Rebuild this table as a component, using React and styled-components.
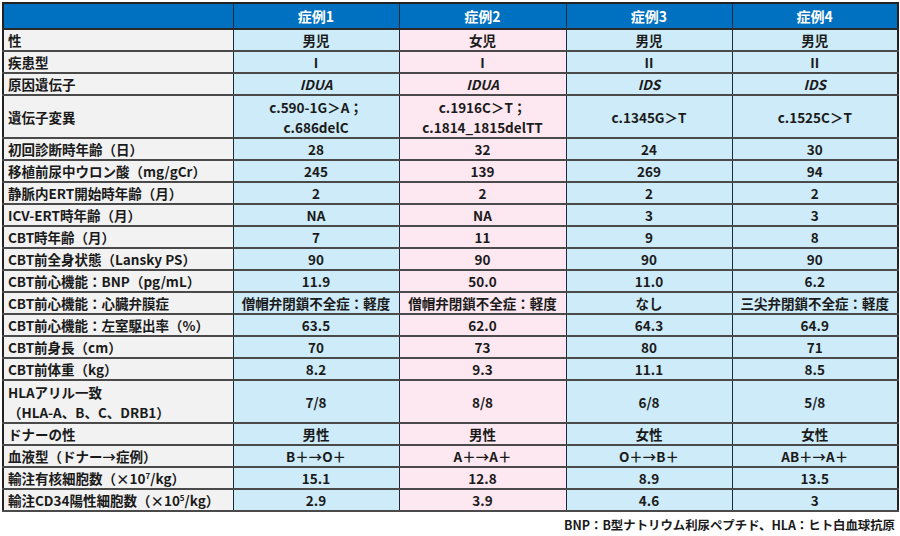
import React from "react";
import styled, { createGlobalStyle } from "styled-components";

const Global = createGlobalStyle`
  html, body { margin: 0; padding: 0; background: #ffffff; }
  body { font-family: "Noto Sans CJK JP", "Liberation Sans", sans-serif; }
`;

const Page = styled.div`
  width: 900px;
  height: 536px;
  padding: 2px 0 0 2px;
  box-sizing: border-box;
  display: flex;
  flex-direction: column;
`;

const Table = styled.table`
  width: 895px;
  border-collapse: collapse;
  border: 2px solid #222;
  table-layout: fixed;
  font-size: 13.5px;
  font-weight: 700;
  color: #1a1a1a;
`;

const HeadCell = styled.th`
  background: #0070c0;
  color: #ffffff;
  font-size: 14px;
  font-weight: 700;
  height: 24px;
  padding: 0;
  border: 1px solid #1b2a3a;
  border-bottom: 2px solid #2a2a2a;
  text-align: center;
  vertical-align: middle;
`;

const Label = styled.td`
  background: #f2f2f2;
  height: ${(p) => (p.$double ? 41 : 20)}px;
  padding: 0 0 0 4px;
  border-left: 1px solid #1b2a3a;
  border-right: 1px solid #1b2a3a;
  border-bottom: 2px solid #4a4a4a;
  text-align: left;
  vertical-align: middle;
  line-height: 20px;
  white-space: nowrap;
`;

const Cell = styled.td`
  background: ${(p) => (p.$pink ? "#fde7f1" : "#cdebf9")};
  padding: 0;
  border-left: 1px solid #1b2a3a;
  border-right: 1px solid #1b2a3a;
  border-bottom: 2px solid #4a4a4a;
  text-align: center;
  vertical-align: middle;
  line-height: 20px;
  font-style: ${(p) => (p.$italic ? "italic" : "normal")};
  white-space: nowrap;
`;

const Sup = styled.sup`
  font-size: 8px;
  vertical-align: 5px;
  line-height: 0;
`;

const Note = styled.div`
  width: 893px;
  text-align: right;
  font-size: 12.4px;
  font-weight: 700;
  color: #1a1a1a;
  margin-top: 5px;
  line-height: 16px;
`;

const rows = [
  { label: "性", vals: ["男児", "女児", "男児", "男児"] },
  { label: "疾患型", vals: ["I", "I", "II", "II"] },
  { label: "原因遺伝子", vals: ["IDUA", "IDUA", "IDS", "IDS"], italic: true },
  {
    label: "遺伝子変異",
    double: true,
    vals: [
      ["c.590-1G＞A；", "c.686delC"],
      ["c.1916C＞T；", "c.1814_1815delTT"],
      "c.1345G＞T",
      "c.1525C＞T",
    ],
  },
  { label: "初回診断時年齢（日）", vals: ["28", "32", "24", "30"] },
  { label: "移植前尿中ウロン酸（mg/gCr）", vals: ["245", "139", "269", "94"] },
  { label: "静脈内ERT開始時年齢（月）", vals: ["2", "2", "2", "2"] },
  { label: "ICV-ERT時年齢（月）", vals: ["NA", "NA", "3", "3"] },
  { label: "CBT時年齢（月）", vals: ["7", "11", "9", "8"] },
  { label: "CBT前全身状態（Lansky PS）", vals: ["90", "90", "90", "90"] },
  { label: "CBT前心機能：BNP（pg/mL）", vals: ["11.9", "50.0", "11.0", "6.2"] },
  {
    label: "CBT前心機能：心臓弁膜症",
    vals: ["僧帽弁閉鎖不全症：軽度", "僧帽弁閉鎖不全症：軽度", "なし", "三尖弁閉鎖不全症：軽度"],
  },
  { label: "CBT前心機能：左室駆出率（%）", vals: ["63.5", "62.0", "64.3", "64.9"] },
  { label: "CBT前身長（cm）", vals: ["70", "73", "80", "71"] },
  { label: "CBT前体重（kg）", vals: ["8.2", "9.3", "11.1", "8.5"] },
  {
    label: ["HLAアリル一致", "（HLA-A、B、C、DRB1）"],
    double: true,
    vals: ["7/8", "8/8", "6/8", "5/8"],
  },
  { label: "ドナーの性", vals: ["男性", "男性", "女性", "女性"] },
  { label: "血液型（ドナー→症例）", vals: ["B＋→O＋", "A＋→A＋", "O＋→B＋", "AB＋→A＋"] },
  {
    label: (
      <>
        輸注有核細胞数（×10<Sup>7</Sup>/kg）
      </>
    ),
    vals: ["15.1", "12.8", "8.9", "13.5"],
  },
  {
    label: (
      <>
        輸注CD34陽性細胞数（×10<Sup>5</Sup>/kg）
      </>
    ),
    vals: ["2.9", "3.9", "4.6", "3"],
  },
];

function Lines({ v }) {
  if (Array.isArray(v)) {
    return (
      <>
        {v[0]}
        <br />
        {v[1]}
      </>
    );
  }
  return v;
}

export default function App() {
  return (
    <>
      <Global />
      <Page>
        <Table>
          <colgroup>
            <col style={{ width: 230 }} />
            <col style={{ width: 166 }} />
            <col style={{ width: 167 }} />
            <col style={{ width: 166 }} />
            <col style={{ width: 166 }} />
          </colgroup>
          <thead>
            <tr>
              <HeadCell />
              <HeadCell>症例1</HeadCell>
              <HeadCell>症例2</HeadCell>
              <HeadCell>症例3</HeadCell>
              <HeadCell>症例4</HeadCell>
            </tr>
          </thead>
          <tbody>
            {rows.map((r, i) => (
              <tr key={i}>
                <Label $double={r.double}>
                  <Lines v={r.label} />
                </Label>
                {r.vals.map((v, j) => (
                  <Cell key={j} $pink={j === 1} $italic={r.italic}>
                    <Lines v={v} />
                  </Cell>
                ))}
              </tr>
            ))}
          </tbody>
        </Table>
        <Note>BNP：B型ナトリウム利尿ペプチド、HLA：ヒト白血球抗原</Note>
      </Page>
    </>
  );
}
